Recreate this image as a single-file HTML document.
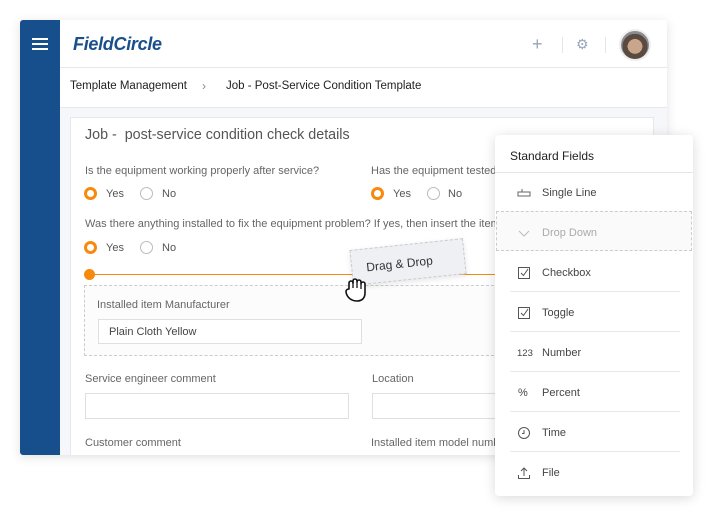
<!DOCTYPE html>
<html><head><style>
*{margin:0;padding:0;box-sizing:border-box}
body{width:714px;height:518px;background:#fff;font-family:"Liberation Sans",sans-serif;position:relative;overflow:hidden}
.a{position:absolute}
.t{position:absolute;white-space:nowrap}
.lbl{font-size:11px;color:#666}
.ro{position:absolute;width:13px;height:13px;border-radius:50%;border:3.5px solid #f7890c;background:#fff}
.rg{position:absolute;width:13px;height:13px;border-radius:50%;border:1px solid #bbb;background:#fff}
.inp{position:absolute;background:#fff;border:1px solid #dcdfe4}
.it{position:absolute;left:0;width:198px;height:40px}
.it span{position:absolute;left:47px;top:15px;font-size:11px;color:#444}
.ic{position:absolute;left:22px;top:14px;width:14px;height:14px}
.sep{position:absolute;left:15px;width:170px;height:1px;background:#e8e8e8}
</style></head><body>
<div class="a" style="left:20px;top:20px;width:647px;height:435px;box-shadow:0 2px 10px rgba(0,0,0,.12);background:#fff"></div>
<div class="a" style="left:20px;top:20px;width:40px;height:435px;background:#164f8c;border-radius:3px 0 0 3px"></div>
<div class="a" style="left:32px;top:38px;width:16px;height:2px;background:#fff"></div>
<div class="a" style="left:32px;top:43px;width:16px;height:2px;background:#fff"></div>
<div class="a" style="left:32px;top:48px;width:16px;height:2px;background:#fff"></div>
<div class="t" style="left:73px;top:34px;font-size:18px;font-weight:bold;font-style:italic;color:#1a4f8a;letter-spacing:-0.3px">FieldCircle</div>
<div class="a" style="left:60px;top:67px;width:607px;height:1px;background:#e6e8eb"></div>
<div class="t" style="left:532px;top:34px;font-size:18px;color:#99a4b8">+</div>
<div class="a" style="left:562px;top:37px;width:1px;height:16px;background:#e5e5e5"></div>
<div class="t" style="left:576px;top:36px;font-size:14px;color:#99a4b8">⚙</div>
<div class="a" style="left:605px;top:37px;width:1px;height:16px;background:#e5e5e5"></div>
<div class="a" style="left:619px;top:29px;width:32px;height:32px;border-radius:50%;border:2px solid #eee;background:radial-gradient(circle at 50% 55%,#c9a58c 0 35%,#5b4a40 36% 60%,#8a8c90 61%)"></div>
<div class="t" style="left:70px;top:80px;font-size:11.5px;color:#222">Template Management</div>
<div class="t" style="left:202px;top:79px;font-size:12px;color:#888">›</div>
<div class="t" style="left:226px;top:80px;font-size:11.5px;color:#222">Job - Post-Service Condition Template</div>
<div class="a" style="left:60px;top:107px;width:607px;height:348px;background:#f5f7fa;border-top:1px solid #e6e8eb"></div>
<div class="a" style="left:70px;top:117px;width:584px;height:338px;background:#fff;border:1px solid #e5e8ec;border-bottom:none"></div>
<div class="t" style="left:85px;top:127px;font-size:14.3px;color:#555">Job -&nbsp; post-service condition check details</div>
<div class="t lbl" style="left:85px;top:165px">Is the equipment working properly after service?</div>
<div class="ro" style="left:84px;top:187px"></div><div class="t" style="left:106px;top:188px;font-size:11px;color:#555">Yes</div>
<div class="rg" style="left:140px;top:187px"></div><div class="t" style="left:162px;top:188px;font-size:11px;color:#555">No</div>
<div class="t lbl" style="left:371px;top:165px">Has the equipment tested</div>
<div class="ro" style="left:371px;top:187px"></div><div class="t" style="left:393px;top:188px;font-size:11px;color:#555">Yes</div>
<div class="rg" style="left:427px;top:187px"></div><div class="t" style="left:448px;top:188px;font-size:11px;color:#555">No</div>
<div class="t lbl" style="left:85px;top:218px">Was there anything installed to fix the equipment problem? If yes, then insert the item</div>
<div class="ro" style="left:84px;top:241px"></div><div class="t" style="left:106px;top:242px;font-size:11px;color:#555">Yes</div>
<div class="rg" style="left:140px;top:241px"></div><div class="t" style="left:162px;top:242px;font-size:11px;color:#555">No</div>
<div class="a" style="left:89px;top:274px;width:410px;height:1px;background:#f7890c"></div>
<div class="a" style="left:84px;top:269px;width:11px;height:11px;border-radius:50%;background:#f7890c"></div>
<div class="a" style="left:84px;top:285px;width:415px;height:71px;border:1px dashed #ccc;border-right:none;background:#fcfcfc"></div>
<div class="t lbl" style="left:97px;top:299px">Installed item Manufacturer</div>
<div class="inp" style="left:98px;top:319px;width:264px;height:25px"></div>
<div class="t" style="left:109px;top:326px;font-size:11px;color:#444">Plain Cloth Yellow</div>
<div class="t lbl" style="left:85px;top:373px">Service engineer comment</div>
<div class="inp" style="left:85px;top:393px;width:264px;height:26px"></div>
<div class="t lbl" style="left:372px;top:373px">Location</div>
<div class="inp" style="left:372px;top:393px;width:130px;height:26px"></div>
<div class="t lbl" style="left:85px;top:437px">Customer comment</div>
<div class="t lbl" style="left:371px;top:437px">Installed item model numb</div>
<div class="a" style="left:351px;top:244px;width:114px;height:36px;background:#eef0f3;border:1px dashed #c8ccd2;transform:rotate(-6deg);box-shadow:0 2px 6px rgba(0,0,0,.1)"><div class="t" style="left:14px;top:11px;font-size:12px;color:#333">Drag &amp; Drop</div></div>
<svg class="a" style="left:342px;top:276px" width="28" height="28" viewBox="0 0 28 28"><path d="M7 12 V7 a2 2 0 0 1 4 0 V5 a2 2 0 0 1 4 0 v1 a2 2 0 0 1 4 0 v2 a2 2 0 0 1 4 0 v9 c0 5-3 8-8 8 c-5 0-10-3-11-9 c0-2 1-3 3-3 z" fill="#fff" stroke="#111" stroke-width="1.6" stroke-linejoin="round"/><path d="M11 6 v6 M15 6 v6 M19 8 v5" stroke="#111" stroke-width="1.3"/></svg>
<div class="a" style="left:495px;top:135px;width:198px;height:361px;background:#fff;border-radius:4px;box-shadow:0 2px 12px rgba(0,0,0,.15)">
<div class="t" style="left:15px;top:14px;font-size:12px;color:#222">Standard Fields</div>
<div class="a" style="left:0;top:37px;width:198px;height:1px;background:#e6e6e6"></div>
<div class="it" style="top:37px"><svg class="ic" viewBox="0 0 14 14"><path d="M1 6h12v4H1z M5 6V3" fill="none" stroke="#666" stroke-width="1"/></svg><span>Single Line</span></div>
<div class="a" style="left:1px;top:76px;width:196px;height:40px;border:1px dashed #ccc;background:#fafafa"></div>
<div class="it" style="top:77px"><svg class="ic" viewBox="0 0 14 14"><path d="M2 5l5 5 5-5" fill="none" stroke="#bbb" stroke-width="1"/></svg><span style="color:#aaa">Drop Down</span></div>
<div class="it" style="top:117px"><svg class="ic" viewBox="0 0 14 14"><path d="M1.5 1.5h11v11h-11z M4 7l2.5 2.5L11 3" fill="none" stroke="#555" stroke-width="1"/></svg><span>Checkbox</span></div>
<div class="sep" style="top:156px"></div>
<div class="it" style="top:157px"><svg class="ic" viewBox="0 0 14 14"><path d="M1.5 1.5h11v11h-11z M4 7l2.5 2.5L11 3" fill="none" stroke="#555" stroke-width="1"/></svg><span>Toggle</span></div>
<div class="sep" style="top:196px"></div>
<div class="it" style="top:197px"><span style="left:22px;font-size:9.5px;top:16px">123</span><span>Number</span></div>
<div class="sep" style="top:236px"></div>
<div class="it" style="top:237px"><span style="left:23px">%</span><span>Percent</span></div>
<div class="sep" style="top:276px"></div>
<div class="it" style="top:277px"><svg class="ic" viewBox="0 0 14 14"><circle cx="7" cy="7" r="5.5" fill="none" stroke="#555"/><path d="M7 4v3.5H5" fill="none" stroke="#555"/></svg><span>Time</span></div>
<div class="sep" style="top:316px"></div>
<div class="it" style="top:317px"><svg class="ic" viewBox="0 0 14 14"><path d="M7 10V2M4 5l3-3 3 3M1.5 9v3.5h11V9" fill="none" stroke="#555"/></svg><span>File</span></div>
</div>
</body></html>
